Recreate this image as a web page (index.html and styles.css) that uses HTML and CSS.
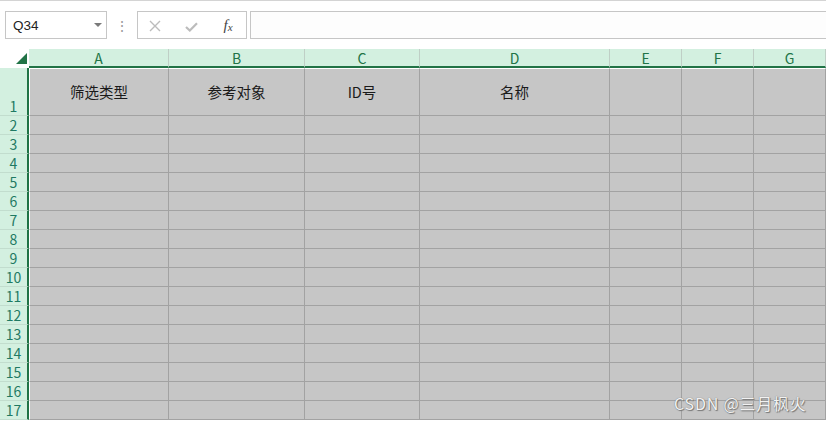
FILE: index.html
```html
<!DOCTYPE html>
<html lang="zh">
<head>
    <meta charset="UTF-8">
    <title>Book1 - Excel</title>
    <link rel="stylesheet" href="styles.css">
</head>
<body>
    <div class="toolbar">
        <div class="namebox">
            <span>Q34</span>
            <span class="arrow"></span>
        </div>
        <div class="dots">⋮</div>
        <div class="fbuttons">
            <span class="fbtn cancel">
                <svg width="12" height="12" viewBox="0 0 12 12">
                    <path d="M1 1 L11 11 M11 1 L1 11" stroke="#bcbcbc" stroke-width="1.4" fill="none"/>
                </svg>
            </span>
            <span class="fbtn enter">
                <svg width="13" height="10" viewBox="0 0 13 10">
                    <path d="M1 5 L4.8 8.5 L12 1.2" stroke="#bcbcbc" stroke-width="2.2" fill="none"/>
                </svg>
            </span>
            <span class="fx">f<span class="sub">x</span></span>
        </div>
        <div class="finput"></div>
    </div>

    <div class="sheet" id="sheet">
        <div class="corner"><span class="tri"></span></div>
        <div class="colhead">A</div>
        <div class="colhead">B</div>
        <div class="colhead">C</div>
        <div class="colhead">D</div>
        <div class="colhead">E</div>
        <div class="colhead">F</div>
        <div class="colhead">G</div>

        <div class="rowhead">1</div>
        <div class="cell first top">筛选类型</div>
        <div class="cell top">参考对象</div>
        <div class="cell top">ID号</div>
        <div class="cell top">名称</div>
        <div class="cell top"></div>
        <div class="cell top"></div>
        <div class="cell top"></div>
    </div>

    <div class="watermark">CSDN @三月枫火</div>

    <script>
        const sheet = document.getElementById('sheet');
        // empty rows 2..17
        for (let r = 2; r <= 17; r++) {
            let html = `<div class="rowhead">${r}</div>`;
            for (let c = 0; c < 7; c++) {
                html += `<div class="cell${c === 0 ? ' first' : ''}"></div>`;
            }
            sheet.insertAdjacentHTML('beforeend', html);
        }
    </script>
</body>
</html>
```

FILE: styles.css
```css
body {
    margin: 0;
    width: 826px;
    height: 421px;
    overflow: hidden;
    background-color: #fff;
    font-family: "Noto Sans CJK SC", "Liberation Sans", sans-serif;
    position: relative;
}
.toolbar {
    height: 49px;
    border-top: 1px solid #d4d4d4;
    box-sizing: border-box;
    padding: 10px 0 0 5px;
    display: flex;
    align-items: flex-start;
}
.namebox {
    width: 102px;
    height: 28px;
    box-sizing: border-box;
    border: 1px solid #c6c6c6;
    background-color: #fff;
    display: flex;
    align-items: center;
    justify-content: space-between;
    padding: 0 4px 0 7px;
    font-family: "Liberation Sans", sans-serif;
    font-size: 13.5px;
    color: #222;
}
.arrow {
    width: 0;
    height: 0;
    border-left: 4px solid transparent;
    border-right: 4px solid transparent;
    border-top: 4px solid #7a7a7a;
}
.dots {
    width: 30px;
    height: 28px;
    line-height: 28px;
    text-align: center;
    color: #9a9a9a;
    font-size: 14px;
}
.fbuttons {
    width: 110px;
    height: 28px;
    box-sizing: border-box;
    border: 1px solid #c6c6c6;
    display: flex;
    align-items: center;
}
.fbtn {
    display: flex;
    justify-content: center;
    align-items: center;
}
.fbtn.cancel {
    width: 34px;
    padding-top: 1px;
}
.fbtn.enter {
    width: 38px;
    padding-top: 3px;
}
.fx {
    width: 36px;
    text-align: center;
    font-family: "Liberation Serif", serif;
    font-style: italic;
    color: #444;
    font-size: 15px;
    line-height: 20px;
}
.fx .sub {
    font-size: 11px;
    position: relative;
    top: 1px;
}
.finput {
    flex: 1;
    margin-left: 3px;
    height: 28px;
    box-sizing: border-box;
    border: 1px solid #c6c6c6;
    border-right: none;
    background-color: #fdfdfd;
}

.sheet {
    display: grid;
    grid-template-columns: 29px 140px 136px 115px 190px 72px 72px 72px;
    grid-template-rows: 19px 48px repeat(16, 19px);
}
.sheet > div {
    box-sizing: border-box;
}
.corner {
    background-color: #fff;
    display: flex;
    justify-content: flex-end;
    align-items: flex-end;
    padding: 0 2px 4px 0;
}
.tri {
    width: 0;
    height: 0;
    border-left: 11px solid transparent;
    border-bottom: 11px solid #217346;
}
.colhead {
    background-color: #d3f0e0;
    border-right: 1px solid #bfcfc6;
    border-bottom: 2px solid #217346;
    color: #217346;
    font-size: 14px;
    line-height: 18px;
    text-align: center;
}
.rowhead {
    background-color: #d3f0e0;
    border-right: 2px solid #217346;
    border-bottom: 1px solid #c2ddce;
    color: #1f7a63;
    font-size: 14px;
    line-height: 16px;
    display: flex;
    align-items: flex-end;
    justify-content: center;
    padding-bottom: 1px;
}
.cell {
    background-color: #c6c6c6;
    border-right: 1px solid #a2a2a2;
    border-bottom: 1px solid #a2a2a2;
    font-size: 14.5px;
    color: #1a1a1a;
    display: flex;
    align-items: center;
    justify-content: center;
}
.cell.first {
    border-left: 1px solid #fff;
}
.cell.top {
    border-top: 1px solid #fff;
    padding-bottom: 2px;
}
.watermark {
    position: absolute;
    left: 674px;
    top: 391px;
    font-size: 16px;
    color: #f2f2f2;
    text-shadow: 0 0 1px #666, 1px 1px 1px #777;
    letter-spacing: 0.8px;
}
```
